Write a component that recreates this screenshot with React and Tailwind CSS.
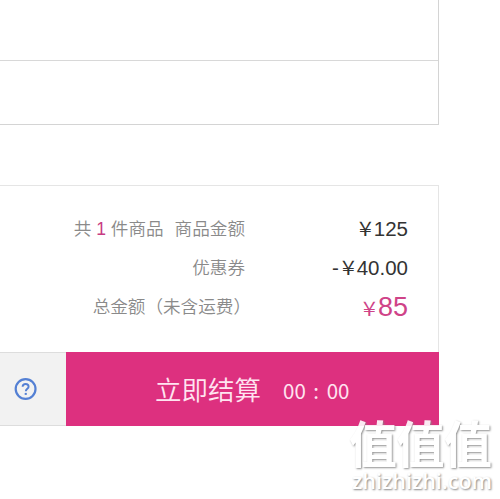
import React from 'react';

const SummaryRow = ({ label, children }) => (
    <div className="flex h-[39px] items-center justify-between">
        <div className="flex w-[245px] justify-end whitespace-pre text-[17.6px] font-[350] text-[#8a8a8a]">{label}</div>
        <div className="flex items-baseline text-[20.5px] text-[#333]">{children}</div>
    </div>
);

const Yen = () => (
    <span className="mr-[2px] inline-block origin-right scale-x-[1.2] text-[20px] font-[350] leading-[24px] [font-family:'Noto_Sans_CJK_SC',sans-serif]">¥</span>
);

const HelpIcon = () => (
    <svg className="h-6 w-6" viewBox="0 0 24 24" fill="none" stroke="#5480d4" strokeWidth="2.2">
        <circle cx="11.6" cy="12" r="9.9" />
        <path d="M8.6 9.8C8.7 7.9 9.8 7 11.6 7s3 1.1 3 2.7c0 2-2.8 2.2-2.8 4.5" strokeWidth="1.9" />
        <path d="M10.7 16.9h2.1" strokeWidth="2" />
    </svg>
);

const Watermark = () => (
    <div className="absolute left-[349px] top-[417px] w-[150px] whitespace-nowrap text-white">
        <div className="h-[52px] origin-top scale-y-[1.03] text-[48px] font-bold leading-[48px] tracking-[-0.5px] opacity-90 [font-family:'Noto_Sans_CJK_SC',sans-serif] [text-shadow:1px_1px_2px_#888]">
            值值值
        </div>
        <div className="h-[24px] pl-[3px] text-[21.5px] font-semibold leading-[24px] [font-family:'Open_Sans',sans-serif] [text-shadow:1px_1px_2px_#888]">
            zhizhizhi.com
        </div>
    </div>
);

const App = () => (
    <div className="relative h-[499px] w-[500px] overflow-hidden bg-white [font-family:'Liberation_Sans','Noto_Sans_CJK_SC',sans-serif]">
        {/* Order table */}
        <div className="h-[125px] w-[439px] border-b border-r border-[#d4d4d4]">
            <div className="h-[61px] border-b border-[#d8d8d8]" />
        </div>

        {/* Totals */}
        <div className="mt-[60px] h-[241px] w-[439px] border-r border-t border-[#e5e5e5]">
            <div className="h-[166px] pr-[30px] pt-6">
                <SummaryRow
                    label={
                        <>
                            <span>
                                共 <span className="font-normal text-[#c83c83]">1</span> 件商品
                            </span>
                            <span className="ml-[11px]">商品金额</span>
                        </>
                    }
                >
                    <Yen />
                    125
                </SummaryRow>
                <SummaryRow label="优惠券">
                    <span className="mr-[5px]">-</span>
                    <Yen />
                    40.00
                </SummaryRow>
                <SummaryRow label={<span className="-mr-[6px]">总金额（未含运费）</span>}>
                    <span className="flex items-baseline text-[#cf4388]">
                        <Yen />
                        <span className="text-[27px]">85</span>
                    </span>
                </SummaryRow>
            </div>
            <div className="-mr-px flex h-[74px]">
                <div className="flex w-[66px] items-center border-y border-[#ddd] bg-[#f2f2f2] pl-[14px]">
                    <HelpIcon />
                </div>
                <button className="flex flex-1 items-center bg-[#dd307f] pl-[89px] text-[#ffe4f0] [font-family:'Noto_Sans_CJK_SC',sans-serif]">
                    <span className="text-[26.5px] font-[350]">立即结算</span>
                    <span className="ml-[22px] mt-[3px] whitespace-nowrap text-[20.5px] [word-spacing:3px]">00 : 00</span>
                </button>
            </div>
        </div>

        <Watermark />
    </div>
);

export default App;
